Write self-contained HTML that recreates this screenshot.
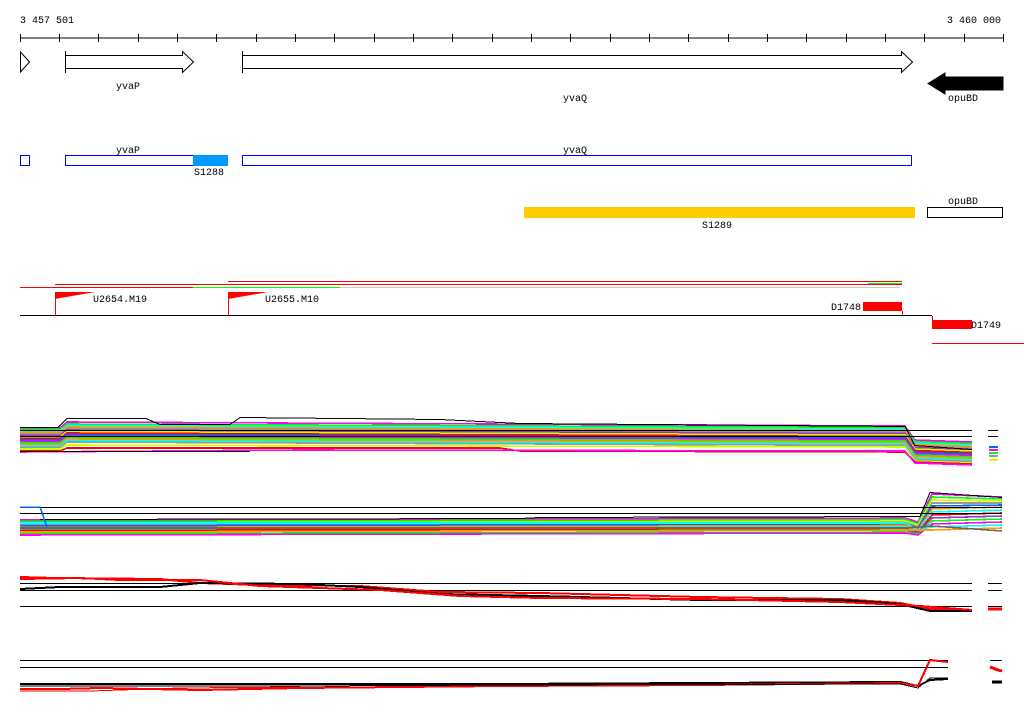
<!DOCTYPE html>
<html><head><meta charset="utf-8"><style>
html,body{margin:0;padding:0;background:#fff;width:1024px;height:714px;overflow:hidden}
svg{display:block}
text{font-family:"Liberation Mono",monospace;font-size:10px;fill:#000}
</style></head><body>
<svg width="1024" height="714" viewBox="0 0 1024 714" xmlns="http://www.w3.org/2000/svg" shape-rendering="crispEdges">
<text x="20" y="23">3 457 501</text>
<text x="1001" y="23" text-anchor="end">3 460 000</text>
<line x1="20" y1="38" x2="1003" y2="38" stroke="#000"/>
<g stroke="#000">
<line x1="20.5" y1="34" x2="20.5" y2="42"/><line x1="59.5" y1="34" x2="59.5" y2="42"/><line x1="98.5" y1="34" x2="98.5" y2="42"/><line x1="138.5" y1="34" x2="138.5" y2="42"/><line x1="177.5" y1="34" x2="177.5" y2="42"/><line x1="216.5" y1="34" x2="216.5" y2="42"/><line x1="256.5" y1="34" x2="256.5" y2="42"/><line x1="295.5" y1="34" x2="295.5" y2="42"/><line x1="334.5" y1="34" x2="334.5" y2="42"/><line x1="374.5" y1="34" x2="374.5" y2="42"/><line x1="413.5" y1="34" x2="413.5" y2="42"/><line x1="452.5" y1="34" x2="452.5" y2="42"/><line x1="492.5" y1="34" x2="492.5" y2="42"/><line x1="531.5" y1="34" x2="531.5" y2="42"/><line x1="570.5" y1="34" x2="570.5" y2="42"/><line x1="610.5" y1="34" x2="610.5" y2="42"/><line x1="649.5" y1="34" x2="649.5" y2="42"/><line x1="688.5" y1="34" x2="688.5" y2="42"/><line x1="728.5" y1="34" x2="728.5" y2="42"/><line x1="767.5" y1="34" x2="767.5" y2="42"/><line x1="806.5" y1="34" x2="806.5" y2="42"/><line x1="846.5" y1="34" x2="846.5" y2="42"/><line x1="885.5" y1="34" x2="885.5" y2="42"/><line x1="924.5" y1="34" x2="924.5" y2="42"/><line x1="964.5" y1="34" x2="964.5" y2="42"/><line x1="1003.5" y1="34" x2="1003.5" y2="42"/>
</g>
<!-- gene arrows -->
<g fill="#fff" stroke="#000" shape-rendering="auto">
<polygon points="20.5,52 29.5,62 20.5,72"/>
<polygon points="65.5,55.5 182.5,55.5 182.5,51.5 193.5,62 182.5,72.5 182.5,68.5 65.5,68.5"/>
<polygon points="242.5,55.5 901.5,55.5 901.5,51.5 912.5,62 901.5,72.5 901.5,68.5 242.5,68.5"/>
<line x1="65.5" y1="51" x2="65.5" y2="73"/>
<line x1="242.5" y1="51" x2="242.5" y2="73"/>
<polygon points="928,83.5 945,73 945,77 1003,77 1003,90 945,90 945,94" fill="#000"/>
</g>
<text x="128" y="89" text-anchor="middle">yvaP</text>
<text x="575" y="101" text-anchor="middle">yvaQ</text>
<text x="963" y="101" text-anchor="middle">opuBD</text>
<!-- row 2 -->
<text x="128" y="153" text-anchor="middle">yvaP</text>
<text x="575" y="153" text-anchor="middle">yvaQ</text>
<g fill="#fff" stroke="#0000ff">
<rect x="20.5" y="155.5" width="9" height="10"/>
<rect x="65.5" y="155.5" width="162" height="10"/>
<rect x="242.5" y="155.5" width="669" height="10"/>
</g>
<rect x="193" y="155" width="35" height="11" fill="#0099ff"/>
<text x="209" y="175" text-anchor="middle">S1288</text>
<text x="963" y="204" text-anchor="middle">opuBD</text>
<rect x="524" y="207" width="391" height="11" fill="#ffcc00"/>
<rect x="927.5" y="207.5" width="75" height="10" fill="#fff" stroke="#000"/>
<text x="717" y="228" text-anchor="middle">S1289</text>
<!-- row 3 -->
<line x1="228" y1="281.5" x2="902" y2="281.5" stroke="#f00"/>
<line x1="55" y1="284.5" x2="782" y2="284.5" stroke="#f00"/>
<line x1="782" y1="284.5" x2="902" y2="284.5" stroke="#f00"/>
<line x1="868" y1="283.5" x2="902" y2="283.5" stroke="#0f0"/>
<line x1="20" y1="287.5" x2="193" y2="287.5" stroke="#f00"/>
<line x1="193" y1="287.5" x2="340" y2="287.5" stroke="#0f0"/>
<line x1="340" y1="287.5" x2="900" y2="287.5" stroke="#ccc"/>
<line x1="20" y1="315.5" x2="932" y2="315.5" stroke="#000"/>
<line x1="55.5" y1="292" x2="55.5" y2="316" stroke="#f00"/>
<line x1="228.5" y1="292" x2="228.5" y2="316" stroke="#f00"/>
<polygon points="55,292 95,292 55,299" fill="#f00" shape-rendering="auto"/>
<polygon points="228,292 268,292 228,299" fill="#f00" shape-rendering="auto"/>
<text x="93" y="302">U2654.M19</text>
<text x="265" y="302">U2655.M10</text>
<text x="831" y="310">D1748</text>
<rect x="863" y="302" width="39" height="9" fill="#f00"/>
<line x1="902.5" y1="311" x2="902.5" y2="316" stroke="#f00"/>
<line x1="932.5" y1="316" x2="932.5" y2="320" stroke="#f00"/>
<rect x="932" y="320" width="40" height="9" fill="#f00"/>
<text x="971" y="328">D1749</text>
<line x1="932" y1="343.5" x2="1024" y2="343.5" stroke="#f00"/>
<!-- band 1 -->
<g fill="none" stroke-width="1.6">
<polyline stroke="#ff00ff" points="20,428 60,428 67,422 905,426 915,440 972,442"/>
<polyline stroke="#00ff00" points="20,429.5 60,429.5 67,424 905,427.5 915,441.5 972,443.5"/>
<polyline stroke="#00ffff" points="20,431 60,431 67,425.5 905,429 915,443 972,445"/>
<polyline stroke="#ff9900" points="20,432.5 60,432.5 67,427 905,430.5 915,444.5 972,446.5"/>
<polyline stroke="#999" points="20,434 60,434 67,428.5 905,432 915,446 972,448"/>
<polyline stroke="#9933cc" points="20,435.5 60,435.5 67,430 905,433.5 915,447.5 972,449.5"/>
<polyline stroke="#ccff00" points="20,437 60,437 67,431.5 905,435 915,449 972,451"/>
<polyline stroke="#ff0000" points="20,438.5 60,438.5 67,433 905,436.5 915,450.5 972,452.5"/>
<polyline stroke="#0066ff" points="20,440 60,440 67,434.5 905,438 915,452 972,454"/>
<polyline stroke="#ff00ff" points="20,441.5 60,441.5 67,436 905,439.5 915,453.5 972,455.5"/>
<polyline stroke="#00ff00" points="20,443 60,443 67,437.5 905,441 915,455 972,457"/>
<polyline stroke="#ff9900" points="20,444.5 60,444.5 67,439 905,442.5 915,456.5 972,458.5"/>
<polyline stroke="#00ffff" points="20,446 60,446 67,440.5 905,444 915,458 972,460"/>
<polyline stroke="#999" points="20,447.5 60,447.5 67,442 905,445.5 915,459.5 972,461.5"/>
<polyline stroke="#ccff00" points="20,449 60,449 67,445 905,447 915,461 972,463"/>
<polyline stroke="#ff0000" points="20,451 60,451 67,448 500,448 520,451 905,452 915,462 972,464"/>
<polyline stroke="#ff00ff" points="20,452 300,450 905,451 915,463 972,465"/>
</g>
<g fill="none" stroke="#000">
<polyline points="20,427.5 58,427.5 67,418.5 146,418.5 160,424.5 230,424.5 240,417.5 440,419.5 520,423.5 905,426.5 915,445.5 972,449.5"/>
<line x1="20" y1="430.5" x2="972" y2="430.5"/><line x1="20" y1="436.5" x2="972" y2="436.5"/>
<line x1="20" y1="451.5" x2="250" y2="451.5"/>
<line x1="988" y1="430.5" x2="998" y2="430.5"/><line x1="988" y1="436.5" x2="998" y2="436.5"/>
</g>
<g stroke-width="2">
<line x1="989" y1="447" x2="998" y2="447" stroke="#0066ff"/><line x1="989" y1="450" x2="998" y2="450" stroke="#ff00ff"/><line x1="989" y1="453" x2="998" y2="453" stroke="#00ff00"/><line x1="989" y1="456" x2="998" y2="456" stroke="#999"/><line x1="989" y1="460" x2="998" y2="460" stroke="#ccff00"/>
</g>
<!-- band 2 -->
<g fill="none" stroke-width="1.6">
<polyline stroke="#ff00ff" points="20,520 905,518 918,522 932,494 1002,497"/>
<polyline stroke="#00ff00" points="20,521.5 905,519.5 918,523.5 932,497 1002,499"/>
<polyline stroke="#ccff00" points="20,523 905,521 918,525 932,500 1002,501"/>
<polyline stroke="#999" points="20,524.5 905,522.5 918,526.5 932,503 1002,503"/>
<polyline stroke="#0066ff" points="20,526 905,524 918,528 932,506 1002,505"/>
<polyline stroke="#ff9900" points="20,527.5 905,525.5 918,529.5 932,509 1002,507"/>
<polyline stroke="#00ffff" points="20,529 905,527 918,531 932,512 1002,510"/>
<polyline stroke="#ff0000" points="20,530.5 905,528.5 918,532.5 932,515 1002,513"/>
<polyline stroke="#9933cc" points="20,532 905,530 918,533 932,518 1002,516"/>
<polyline stroke="#00ff00" points="20,533.5 905,532 918,534 932,521 1002,519"/>
<polyline stroke="#ff00ff" points="20,535 905,533 918,535 932,524 1002,522"/>
<polyline stroke="#00ffff" points="20,523 905,523 918,530 932,527 1002,525"/>
<polyline stroke="#ff9900" points="20,532 905,530 932,530 1002,528"/>
<polyline stroke="#666" points="20,528 905,528 932,526 1002,531"/>
</g>
<g fill="none" stroke="#000">
<line x1="20" y1="507.5" x2="1002" y2="507.5"/><line x1="20" y1="513.5" x2="1002" y2="513.5"/>
<polyline points="40,519.5 520,518.5 540,517.5 920,516.5 930,492.5 1002,497.5"/>
</g>
<polyline fill="none" stroke="#0066ff" stroke-width="1.5" points="20,507 40,507 47,527"/>
<!-- band 3 -->
<g fill="none" stroke="#000">
<line x1="20" y1="583.5" x2="972" y2="583.5"/><line x1="20" y1="590.5" x2="972" y2="590.5"/><line x1="20" y1="606.5" x2="972" y2="606.5"/>
<line x1="988" y1="583.5" x2="1002" y2="583.5"/><line x1="988" y1="590.5" x2="1002" y2="590.5"/><line x1="988" y1="606.5" x2="1002" y2="606.5"/>
</g>
<g fill="none" stroke-width="2">
<polyline stroke="#f00" points="20,577 55,578 160,579 200,583 260,585 360,586 440,592 540,593 620,595 700,597 840,599 900,603 930,609 972,610"/>
<polyline stroke="#000" points="20,589 60,587 160,587 200,583 300,584 360,587 440,594 540,596 620,598 700,600 840,600 900,604 930,611 972,611"/>
<polyline stroke="#f00" points="20,579 80,578 120,580 200,580 260,586 380,590 460,596 540,598 700,599 840,602 920,606 972,610"/>
<line x1="988" y1="609" x2="1002" y2="609" stroke="#f00" stroke-width="3"/>
</g>
<!-- band 4 -->
<g fill="none" stroke="#000">
<line x1="20" y1="660.5" x2="948" y2="660.5"/><line x1="20" y1="667.5" x2="948" y2="667.5"/>
<line x1="990" y1="660.5" x2="1002" y2="660.5"/>
</g>
<g fill="none" stroke-width="2">
<polyline stroke="#000" points="20,684 180,684 300,684 500,684 700,683 900,682 918,686 930,680 948,679"/>
<polyline stroke="#f00" points="20,689 60,689 100,688 200,690 300,688 500,686 700,685 900,683 918,686 930,660 948,662"/>
<polyline stroke="#000" points="20,686 300,686 500,685 900,684 918,688 930,678 948,678" stroke-width="1"/>
<polyline stroke="#f00" points="20,691 90,691 180,688 300,687" stroke-width="1"/>
<polyline stroke="#f00" points="990,667 998,670 1002,671" stroke-width="3"/>
<line x1="992" y1="682" x2="1002" y2="682" stroke="#000" stroke-width="3"/>
</g>
</svg>
</body></html>
